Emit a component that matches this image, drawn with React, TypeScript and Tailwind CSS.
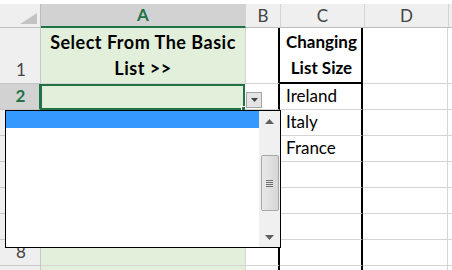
import React from 'react';

const grid = 'border-[#d4d4d4]';

const HeaderCell = ({ label, w, active }: { label: string; w: string; active?: boolean }) => (
  <div
    className={`${w} h-full flex items-center justify-center border-r ${grid} ${
      active ? 'bg-[#d2d2d2] text-[#217346] font-bold border-b-2 border-b-[#217346]' : 'bg-[#efefef] text-[#444] border-b border-b-[#bdbdbd]'
    }`}
  >
    {label}
  </div>
);

const RowHead = ({ n, active }: { n?: string; active?: boolean }) => (
  <div
    className={`w-[41px] shrink-0 h-full flex items-end justify-center pb-[1px] pl-[2px] border-r border-b border-[#c6c6c6] ${
      active ? 'bg-[#d2d2d2] text-[#217346] font-bold border-r-2 border-r-[#217346]' : 'bg-[#efefef] text-[#444]'
    }`}
  >
    {n}
  </div>
);

const Row = ({ n, c, h = 'h-[26px]' }: { n?: string; c?: string; h?: string }) => (
  <div className={`flex ${h}`}>
    <RowHead n={n} />
    <div className={`w-[205px] shrink-0 bg-[#e2efda] border-r border-b ${grid}`} />
    <div className={`w-[34px] shrink-0 border-r-2 border-r-black border-b ${grid}`} />
    <div className={`w-[83px] shrink-0 border-r-2 border-r-black border-b ${grid} pl-[6px] flex items-end pb-[1px]`}>{c}</div>
    <div className={`w-[85px] shrink-0 border-r border-b ${grid}`} />
    <div className={`flex-1 border-b ${grid}`} />
  </div>
);

export default function App() {
  return (
    <div className="relative w-[452px] h-[270px] overflow-hidden bg-white text-[17px] text-black" style={{ fontFamily: 'Lato, "Liberation Sans", sans-serif' }}>
      <div className="h-[4px]" />
      {/* column headers */}
      <div className="flex h-[24px] text-[17px]">
        <div className="w-[41px] shrink-0 bg-[#efefef] border-r border-b border-[#bdbdbd] flex items-end justify-end pr-[3px] pb-[3px]">
          <svg width="17" height="11" viewBox="0 0 17 11">
            <polygon points="17,0 17,11 0,11" fill="#c3c3c3" />
          </svg>
        </div>
        <HeaderCell label="A" w="w-[205px] shrink-0" active />
        <HeaderCell label="B" w="w-[35px] shrink-0" />
        <HeaderCell label="C" w="w-[84px] shrink-0" />
        <HeaderCell label="D" w="w-[84px] shrink-0" />
        <div className="flex-1 bg-[#efefef] border-b border-b-[#bdbdbd]" />
      </div>

      {/* row 1 */}
      <div className="flex h-[56px]">
        <RowHead n="1" />
        <div className={`w-[205px] shrink-0 bg-[#e2efda] border-r border-b ${grid} flex items-center justify-center text-center text-[18px] font-bold leading-[26px] tracking-[0.5px] pb-[2px]`}>
          Select From The Basic
          <br />
          List &gt;&gt;
        </div>
        <div className={`w-[34px] shrink-0 border-r-2 border-r-black border-b ${grid}`} />
        <div className="w-[83px] shrink-0 border-r-2 border-r-black border-b-2 border-b-black flex items-center justify-center text-center font-bold leading-[26px] pl-[2px]">
          Changing
          <br />
          List Size
        </div>
        <div className={`w-[85px] shrink-0 border-r border-b ${grid}`} />
        <div className={`flex-1 border-b ${grid}`} />
      </div>

      {/* row 2 with selected cell */}
      <div className="flex h-[26px]">
        <RowHead n="2" active />
        <div className="relative w-[205px] shrink-0 bg-[#e2efda] border-2 border-[#217346] -ml-[1px]">
          <div className="absolute -right-[3px] -bottom-[3px] w-[5px] h-[5px] bg-[#217346] border border-white" />
        </div>
        <div className={`w-[35px] shrink-0 border-r-2 border-r-black border-b ${grid} relative`}>
          <div className="absolute left-[1px] top-[8px] w-[16px] h-[16px] bg-[#e4e4e4] border border-[#a6a6a6] flex items-center justify-center">
            <svg width="7" height="4" viewBox="0 0 7 4">
              <polygon points="0,0 7,0 3.5,4" fill="#444" />
            </svg>
          </div>
        </div>
        <div className={`w-[83px] shrink-0 border-r-2 border-r-black border-b ${grid} pl-[6px] flex items-end pb-[1px]`}>Ireland</div>
        <div className={`w-[85px] shrink-0 border-r border-b ${grid}`} />
        <div className={`flex-1 border-b ${grid}`} />
      </div>
      <Row n="3" c="Italy" />
      <Row n="4" c="France" />
      <Row n="5" />
      <Row n="6" />
      <Row n="7" />
      <Row n="8" />
      <Row />

      {/* dropdown list */}
      <div className="absolute left-[5px] top-[110px] w-[276px] h-[138px] bg-white border border-black flex">
        <div className="flex-1">
          <div className="h-[17px] bg-[#3399ff]" />
        </div>
        <div className="w-[21px] bg-[#f0f0f0] flex flex-col items-center">
          <div className="h-[20px] flex items-center justify-center">
            <svg width="9" height="5" viewBox="0 0 9 5">
              <polygon points="0,5 9,5 4.5,0" fill="#606060" />
            </svg>
          </div>
          <div className="h-[24px]" />
          <div className="w-[18px] h-[56px] rounded-[2px] border border-[#a8a8a8] bg-gradient-to-r from-[#e8e8e8] to-[#d6d6d6] flex flex-col items-center justify-center gap-[1px]">
            <div className="w-[7px] h-[1px] bg-[#707070]" />
            <div className="w-[7px] h-[1px] bg-[#707070]" />
            <div className="w-[7px] h-[1px] bg-[#707070]" />
            <div className="w-[7px] h-[1px] bg-[#707070]" />
          </div>
          <div className="flex-1" />
          <div className="h-[20px] flex items-center justify-center">
            <svg width="9" height="5" viewBox="0 0 9 5">
              <polygon points="0,0 9,0 4.5,5" fill="#606060" />
            </svg>
          </div>
        </div>
      </div>
    </div>
  );
}
